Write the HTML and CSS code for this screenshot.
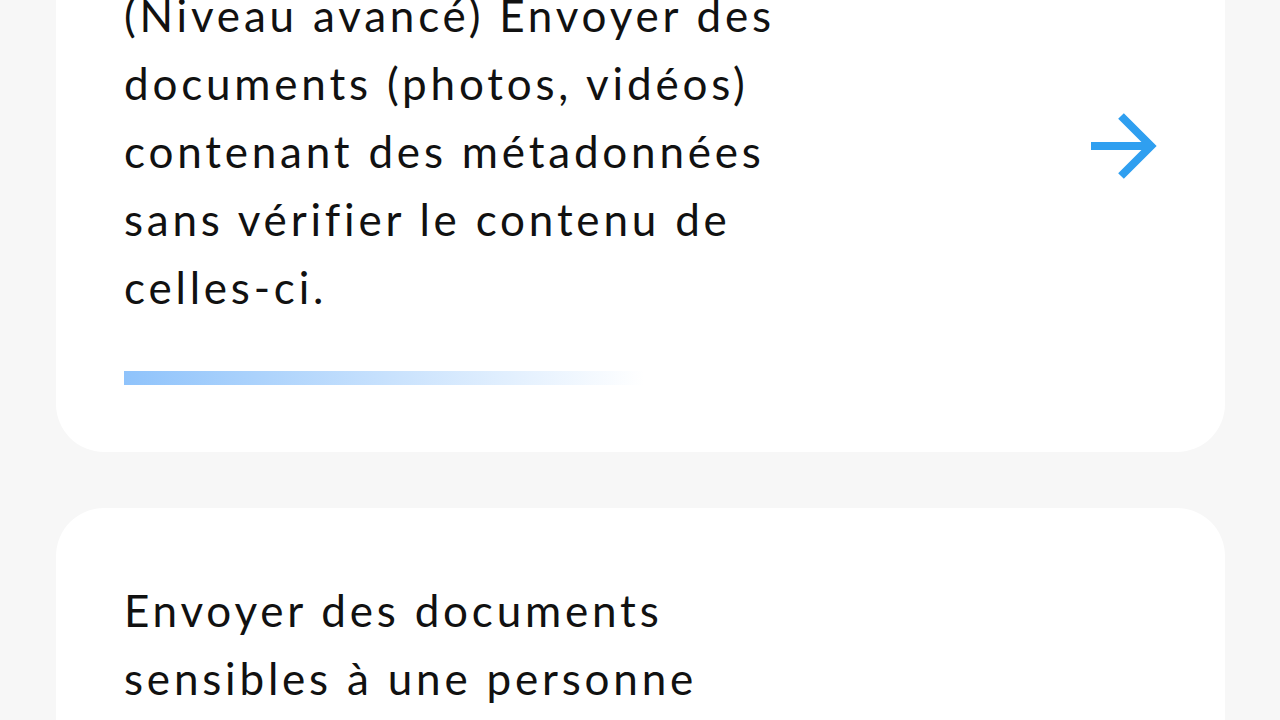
FILE: index.html
```html
<!DOCTYPE html>
<html lang="fr">
  <head>
    <meta charset="UTF-8" />
    <meta name="viewport" content="width=device-width, initial-scale=1.0" />
    <title>Bonnes pratiques</title>
    <link rel="stylesheet" href="styles.css">
  </head>
  <body>
    <div class="list">
      <!-- Carte 1 -->
      <a class="card" href="#">
        <div class="card-body">
          <p class="card-text">
            (Niveau avancé) Envoyer des documents (photos, vidéos) contenant
            des métadonnées sans vérifier le contenu de celles-ci.
          </p>
          <svg class="card-arrow" viewBox="0 0 66 68" aria-hidden="true">
            <path d="M0 34 H60 M30 4 L60 34 L30 64" />
          </svg>
        </div>
        <div class="card-progress"></div>
      </a>

      <!-- Carte 2 -->
      <a class="card" href="#">
        <div class="card-body">
          <p class="card-text">
            Envoyer des documents sensibles à une personne non autorisée ou
            par un canal non sécurisé (messagerie personnelle, clé USB non
            chiffrée).
          </p>
          <svg class="card-arrow" viewBox="0 0 66 68" aria-hidden="true">
            <path d="M0 34 H60 M30 4 L60 34 L30 64" />
          </svg>
        </div>
        <div class="card-progress"></div>
      </a>
    </div>
  </body>
</html>
```

FILE: styles.css
```css
/* ======= Variables ======= */
:root {
  --font-family: "Lato", "Noto Sans", sans-serif;
  --color-background: #f7f7f7;
  --color-card-bg: #ffffff;
  --color-text: #111111;
  --color-accent: #2f9ff0;
  --radius: 48px;
}

* {
  box-sizing: border-box;
  margin: 0;
  padding: 0;
}

body {
  font-family: var(--font-family);
  background-color: var(--color-background);
  color: var(--color-text);
}

/* ======= Liste des cartes ======= */
.list {
  display: flex;
  flex-direction: column;
  gap: 56px;
  padding: 0 55px 0 56px;
  margin-top: -87px; /* page défilée */
}

.card {
  display: block;
  background-color: var(--color-card-bg);
  border-radius: var(--radius);
  padding: 68px 68px 67px;
  color: inherit;
  text-decoration: none;
}

.card-body {
  display: flex;
  align-items: center;
  justify-content: space-between;
}

.card-text {
  font-size: 44px;
  line-height: 68px;
  letter-spacing: 3.8px;
  max-width: 668px;
}

.card-arrow {
  width: 66px;
  height: 68px;
  flex-shrink: 0;
  margin-top: -10px;
  fill: none;
  stroke: var(--color-accent);
  stroke-width: 8;
  stroke-linejoin: miter;
}

.card-progress {
  margin-top: 50px;
  width: 520px;
  height: 14px;
  background: linear-gradient(
    to right,
    rgba(143, 195, 251, 1),
    rgba(143, 195, 251, 0)
  );
}
```
